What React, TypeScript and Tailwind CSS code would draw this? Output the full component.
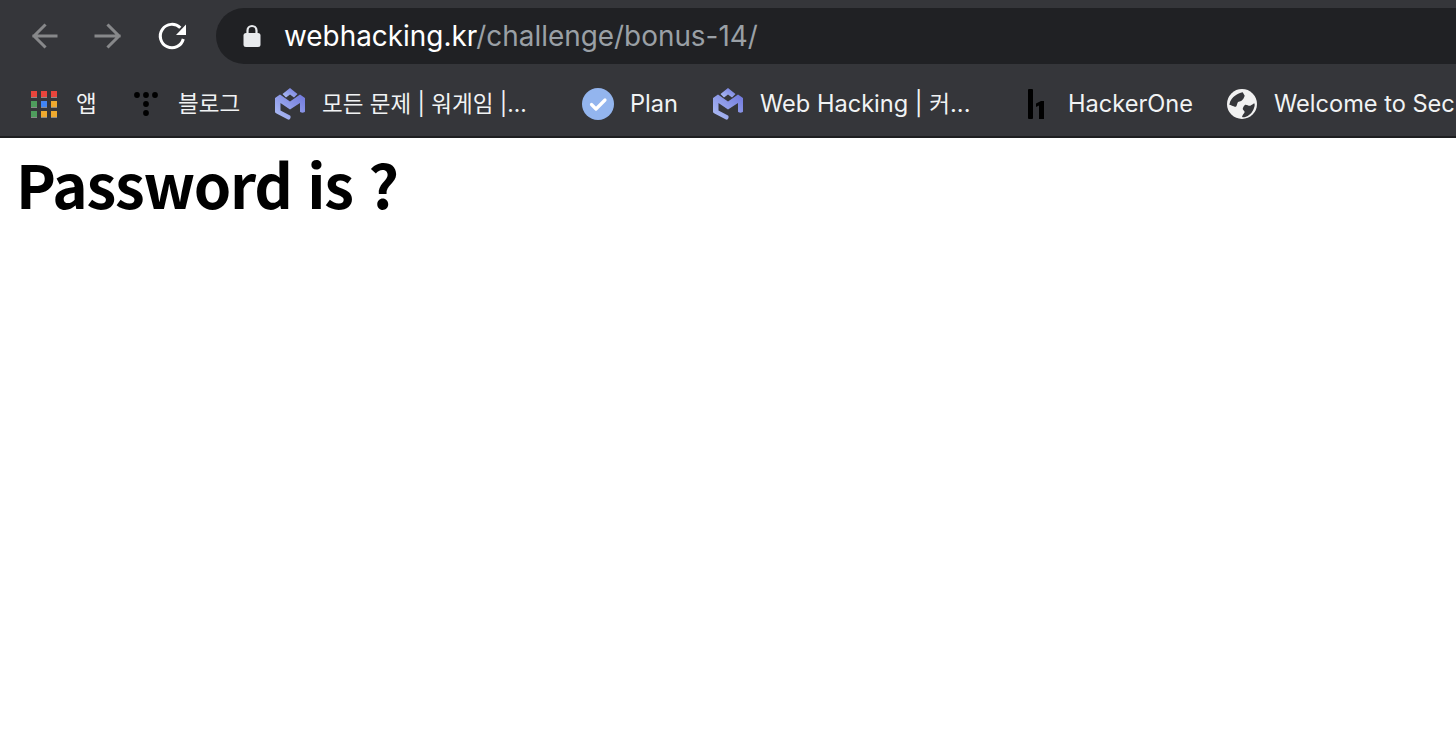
import React from 'react';

const ui = "font-['Inter','Noto_Sans_CJK_KR',sans-serif]";

function AppsIcon() {
  const colors = ['#e8453c', '#e8453c', '#e8453c', '#4f9d5d', '#4285f4', '#eda92f', '#4f9d5d', '#eda92f', '#eda92f'];
  return (
    <div className="grid w-[26px] grid-cols-3 gap-x-[4px] gap-y-[3px]">
      {colors.map((c, i) => (
        <svg key={i} width="6" height="7" viewBox="0 0 6 7">
          <rect width="6" height="6" fill={c} />
          <rect y="6" width="6" height="1" fill="#8a8a8a" />
        </svg>
      ))}
    </div>
  );
}

function TistoryIcon() {
  return (
    <svg width="24" height="24" viewBox="0 0 24 24" fill="#000">
      <circle cx="3" cy="3" r="2.9" />
      <circle cx="12" cy="3" r="2.9" />
      <circle cx="21" cy="3" r="2.9" />
      <circle cx="12" cy="12" r="2.9" />
      <circle cx="12" cy="21" r="2.9" />
    </svg>
  );
}

function WargameIcon({ id }: { id: string }) {
  return (
    <svg width="30" height="32" viewBox="0 0 30 32" fill="none">
      <defs>
        <linearGradient id={id} x1="0" y1="1" x2="1" y2="0">
          <stop offset="0" stopColor="#b0c0f5" />
          <stop offset="1" stopColor="#6f77dc" />
        </linearGradient>
      </defs>
      <path d="M7.5 6 L15 0 L22.5 6 L19 9.5 L15 6.5 L11 9.5 Z" fill={`url(#${id})`} />
      <path
        d="M0 10 L5 6.5 L15 13.5 L25 6.5 L30 10 V23.5 C30 25 25 25 25 23.5 V15 L15 21.5 L5.5 15 V22.5 L15 27.5 C16.5 28.5 15 32.5 13 31.5 L1.5 25.5 C0.5 25 0 24.5 0 23.5 Z"
        fill={`url(#${id})`}
      />
    </svg>
  );
}

function PlanIcon() {
  return (
    <svg width="32" height="32" viewBox="0 0 32 32">
      <circle cx="16" cy="16" r="16" fill="#93b5ee" />
      <path d="M9.5 16.5 L14 21 L23 12" fill="none" stroke="#fff" strokeWidth="3.2" strokeLinecap="round" strokeLinejoin="round" />
    </svg>
  );
}

function HackerOneIcon() {
  return (
    <svg width="16" height="30" viewBox="0 0 16 30" fill="#000">
      <rect x="0" y="0" width="5" height="30" rx="1" />
      <path d="M8 14.5 L13 12 H16 V30 H11 V16.5 L8 18 Z" />
    </svg>
  );
}

function GlobeIcon() {
  return (
    <svg width="30" height="30" viewBox="0 0 30 30">
      <circle cx="15" cy="15" r="15" fill="#f1f1f1" />
      <path
        d="M2.3 15.7 C3 11 6 8 8 6.7 C10.5 5 13 4 15.7 3.3 L17.7 6.7 C17 9 16 10.5 14.5 11.7 C13 12.5 12 12.5 11 13 C10 14.5 10 16.5 9 17.7 C7 17.7 6 17 5 16.7 C4 16 3 15.7 2.3 15.7 Z"
        fill="#35363a"
      />
      <path
        d="M15 28 C15.5 26 17 24.5 17.7 23 C17.5 22 16 21 15.7 20 C16 18 17 16.5 18.3 15.7 C20 15.5 21.5 17 23.3 16.7 C25 16 26 15 27.3 14.3 C27.8 15.5 27.8 16.5 27.3 18 C26.5 21 25 23.5 23.3 25 C21.5 26.5 20 27.5 18.3 28 C17 28.3 16 28.3 15 28 Z"
        fill="#35363a"
      />
    </svg>
  );
}

function Bookmark({ icon, label, iconBox, gap, width }: { icon: React.ReactNode; label: React.ReactNode; iconBox: string; gap: string; width: string }) {
  return (
    <div className={`flex shrink-0 items-center ${width}`}>
      <div className={`flex shrink-0 items-center justify-center ${iconBox} ${gap}`}>{icon}</div>
      <span className="whitespace-nowrap text-[23.6px] leading-none text-[#f1f3f4]">{label}</span>
    </div>
  );
}

function Ko({ children }: { children: React.ReactNode }) {
  return <span className="text-[22.5px]">{children}</span>;
}

export default function App() {
  return (
    <div className="min-h-[742px] overflow-hidden bg-white">
      <header className={`${ui} bg-[#35363a]`}>
        <div className="flex h-[72px] items-center pl-[28px]">
          <svg width="32" height="32" viewBox="0 0 32 32" fill="none" stroke="#87888a" strokeWidth="3" strokeLinecap="square">
            <path d="M28 16 H6 M16.5 5.5 L6 16 L16.5 26.5" />
          </svg>
          <svg className="ml-[32px]" width="32" height="32" viewBox="0 0 32 32" fill="none" stroke="#87888a" strokeWidth="3" strokeLinecap="square">
            <path d="M4 16 H27 M16.5 5.5 L27 16 L16.5 26.5" />
          </svg>
          <svg className="ml-[32px]" width="32" height="32" viewBox="0 0 32 32" fill="none">
            <path d="M24.3 7.8 A11.7 11.7 0 1 0 27.3 19" stroke="#fff" strokeWidth="3" />
            <path d="M20 15 H30 V4.5 Z" fill="#fff" />
          </svg>
          <div className="ml-[28px] flex h-[56px] flex-1 items-center rounded-l-[28px] bg-[#202124] pl-[26px]">
            <svg width="20" height="24" viewBox="0 0 20 24">
              <path d="M5.5 10 V6.5 A4.5 4.5 0 0 1 14.5 6.5 V10" fill="none" stroke="#e8eaed" strokeWidth="2.2" />
              <rect x="1.5" y="9" width="17" height="14" rx="2.5" fill="#e8eaed" />
            </svg>
            <span className="mt-[2px] ml-[22px] text-[27.9px] leading-none whitespace-nowrap">
              <span className="text-white">webhacking.kr</span>
              <span className="text-[#9aa0a6]">/challenge/bonus-14/</span>
            </span>
          </div>
        </div>
        <div className="flex h-[64px] items-center overflow-hidden pl-[28px]">
          <Bookmark icon={<AppsIcon />} label={<Ko>앱</Ko>} iconBox="w-[32px]" gap="mr-[16px]" width="w-[103px]" />
          <Bookmark icon={<TistoryIcon />} label={<Ko>블로그</Ko>} iconBox="w-[30px]" gap="mr-[17px]" width="w-[143px]" />
          <Bookmark icon={<WargameIcon id="wg1" />} label={<Ko>모든 문제 | 워게임 |...</Ko>} iconBox="w-[32px]" gap="mr-[16px]" width="w-[308px]" />
          <Bookmark icon={<PlanIcon />} label="Plan" iconBox="w-[32px]" gap="mr-[16px]" width="w-[130px]" />
          <Bookmark icon={<WargameIcon id="wg2" />} label={<>Web Hacking | <Ko>커</Ko>...</>} iconBox="w-[32px]" gap="mr-[16px]" width="w-[308px]" />
          <Bookmark icon={<HackerOneIcon />} label="HackerOne" iconBox="w-[32px]" gap="mr-[16px]" width="w-[206px]" />
          <Bookmark icon={<GlobeIcon />} label="Welcome to Security" iconBox="w-[32px]" gap="mr-[16px]" width="w-[300px]" />
        </div>
        <div className="h-[2px] bg-[#1d1e20]" />
      </header>
      <h1 className="pl-[16px] pt-[3px] font-['Noto_Sans_CJK_KR',sans-serif] text-[60px] leading-[84px] font-bold tracking-[-1.2px] [word-spacing:3px] text-black">
        Password is ?
      </h1>
    </div>
  );
}
